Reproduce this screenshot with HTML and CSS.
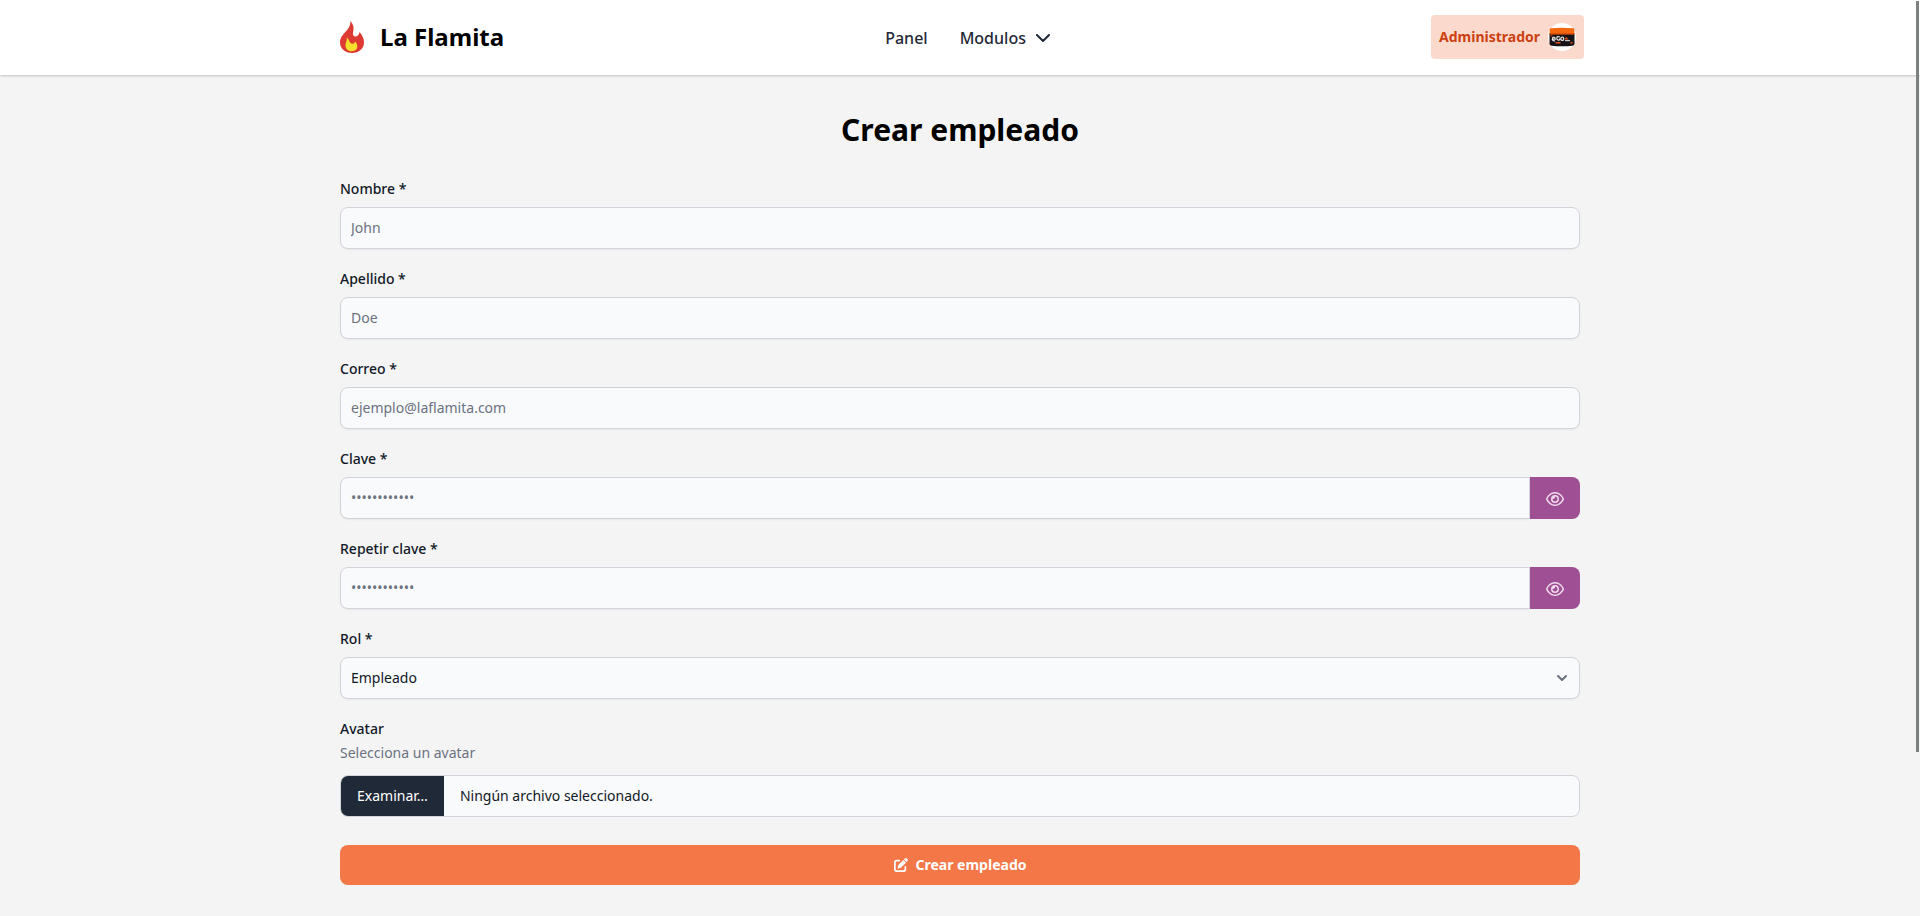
FILE: index.html
```html
<!DOCTYPE html>
<html lang="es">
<head>
<meta charset="utf-8">
<meta name="viewport" content="width=device-width, initial-scale=1">
<title>Crear empleado - La Flamita</title>
<link rel="stylesheet" href="styles.css">
</head>
<body>
<svg class="sprite" aria-hidden="true">
  <symbol id="eye" viewBox="0 0 576 512"><path d="M288 80c-65.2 0-118.8 29.6-159.9 67.7C89.6 183.5 63 226 49.4 256c13.6 30 40.2 72.5 78.6 108.3C169.2 402.4 222.8 432 288 432s118.8-29.6 159.9-67.7C486.4 328.5 513 286 526.6 256c-13.6-30-40.2-72.5-78.6-108.3C406.8 109.6 353.2 80 288 80zM95.4 112.6C142.5 68.8 207.2 32 288 32s145.5 36.8 192.6 80.6c46.8 43.5 78.1 95.4 93 131.1c3.3 7.9 3.3 16.7 0 24.6c-14.9 35.7-46.2 87.7-93 131.1C433.5 443.2 368.8 480 288 480s-145.5-36.8-192.6-80.6C48.6 356 17.3 304 2.5 268.3c-3.3-7.9-3.3-16.7 0-24.6C17.3 208 48.6 156 95.4 112.6zM288 336c44.2 0 80-35.8 80-80s-35.8-80-80-80c-.7 0-1.3 0-2 0c1.3 5.1 2 10.5 2 16c0 35.3-28.7 64-64 64c-5.5 0-10.9-.7-16-2c0 .7 0 1.3 0 2c0 44.2 35.8 80 80 80zm0-208a128 128 0 1 1 0 256 128 128 0 1 1 0-256z"/></symbol>
</svg>

<header class="topbar">
  <div class="topbar-inner">
    <a class="brand" href="#">
      <svg class="flame" viewBox="0 0 24 32" aria-hidden="true">
        <path fill="#dc3a32" d="M10.4 0C13.400 3 14.200 7 13.200 10.500c-.7 2.500-.2 4.400 1.500 4.900 2.400.5 4.400-1.400 4.800-4.400 2.700 3 4.500 6.500 4.500 10.500C24 27.600 18.800 32 12 32S0 27.600 0 21.500C0 16.800 2.600 14 5.400 11 8.600 7.600 10.600 4.600 10.400 0z"/>
        <path fill="#f6df2c" d="M6.800 16.400c2.300 1.600 2.200 3.600 3.400 5.400 1.400 1.500 4 1.100 5.100-1.400 1.400 1.600 2 3.400 2 5.200 0 2.900-2.400 4.600-5.700 4.600-3.500 0-6.100-2.200-6.100-6 0-3 1.800-4.600 1.300-7.800z"/>
      </svg>
      <span>La Flamita</span>
    </a>
    <nav class="menu">
      <a href="#">Panel</a>
      <button type="button" class="menu-button">Modulos
        <svg class="menu-chevron" viewBox="0 0 14 8" aria-hidden="true"><path d="M1 1l6 6 6-6"/></svg>
      </button>
    </nav>
    <button type="button" class="account-button">Administrador
      <svg class="avatar" viewBox="0 0 28 28" aria-hidden="true">
        <circle cx="14" cy="14" r="14" fill="#fff"/>
        <path fill="#151315" d="M1.500 10h25v10.500q0 2-2 2.300-10.500 1-21 0-2-.3-2-2.300z"/>
        <path fill="#f4670f" d="M3 5.200q11-.8 22 0 1.200.1 1.300 1.300v4.800H1.700V6.500Q1.800 5.300 3 5.200z"/>
        <path fill="#d9480b" d="M1.700 10.300h24.600v1.200H1.700z"/>
        <path fill="none" stroke="#e8e6e6" stroke-width="1.200" d="M4.300 16.200h3q0-2-1.500-2T4.300 16.200q0 1.900 2.800 1.600M11.900 14q-3-1.300-3.100 1.200 0 2.400 2.800 1.800v-1.500M14 14.200q1.700-.3 1.700 1.500t-1.500 1.700-1.400-1.600 1.200-1.600"/>
        <path fill="#e6511d" d="M17 15.500l1.500-1.500 1 1.500 1.400 1h-4zM7.500 19h5v1.500h-5zM22.500 19h2v1.500h-2zM2.500 12.500h2v1h-2z"/>
        <path fill="#c9c7c7" d="M17 17h5v1.200h-5z"/>
      </svg>
    </button>
  </div>
</header>

<main class="page">
  <h1>Crear empleado</h1>
  <form class="form">
    <div class="field">
      <label for="nombre">Nombre *</label>
      <input class="control" id="nombre" type="text" placeholder="John">
    </div>
    <div class="field">
      <label for="apellido">Apellido *</label>
      <input class="control" id="apellido" type="text" placeholder="Doe">
    </div>
    <div class="field">
      <label for="correo">Correo *</label>
      <input class="control" id="correo" type="email" placeholder="ejemplo@laflamita.com">
    </div>
    <div class="field">
      <label for="clave">Clave *</label>
      <div class="password">
        <input class="control" id="clave" type="password" placeholder="••••••••••••">
        <button type="button" class="reveal" aria-label="Mostrar clave"><svg aria-hidden="true"><use href="#eye"/></svg></button>
      </div>
    </div>
    <div class="field">
      <label for="repetir">Repetir clave *</label>
      <div class="password">
        <input class="control" id="repetir" type="password" placeholder="••••••••••••">
        <button type="button" class="reveal" aria-label="Mostrar clave repetida"><svg aria-hidden="true"><use href="#eye"/></svg></button>
      </div>
    </div>
    <div class="field">
      <label for="rol">Rol *</label>
      <div class="select">
        <select class="control" id="rol"><option>Empleado</option></select>
        <svg viewBox="0 0 10 6" aria-hidden="true"><path d="M1 1l4 4 4-4"/></svg>
      </div>
    </div>
    <div class="field file-field">
      <label for="avatar">Avatar</label>
      <p class="hint" id="avatar-hint">Selecciona un avatar</p>
      <input class="file-input" id="avatar" type="file" aria-describedby="avatar-hint">
      <label class="file" for="avatar">
        <span class="file-browse">Examinar…</span>
        <span class="file-name">Ningún archivo seleccionado.</span>
      </label>
    </div>
    <button type="submit" class="submit">
      <svg viewBox="0 0 512 512" aria-hidden="true"><path d="M471.6 21.7c-21.9-21.9-57.3-21.9-79.2 0L362.3 51.7l97.9 97.9 30.1-30.1c21.9-21.9 21.9-57.3 0-79.2L471.6 21.7zm-299.2 220c-6.1 6.1-10.8 13.6-13.5 21.9l-29.6 88.8c-2.9 8.6-.6 18.1 5.8 24.6s15.9 8.7 24.6 5.8l88.8-29.6c8.2-2.7 15.7-7.4 21.9-13.5L437.7 172.3 339.7 74.3 172.4 241.7zM96 64C43 64 0 107 0 160V416c0 53 43 96 96 96H352c53 0 96-43 96-96V320c0-17.7-14.3-32-32-32s-32 14.3-32 32v96c0 17.7-14.3 32-32 32H96c-17.7 0-32-14.3-32-32V160c0-17.7 14.3-32 32-32h96c17.7 0 32-14.3 32-32s-14.3-32-32-32H96z"/></svg>
      Crear empleado
    </button>
  </form>
</main>
<div class="scroll-thumb" aria-hidden="true"></div>
</body>
</html>
```
FILE: styles.css
```css
* {
  box-sizing: border-box;
}

body {
  margin: 0;
  background: #f4f4f4;
  color: #111827;
  font-family: "Noto Sans", sans-serif;
  font-size: 14px;
  line-height: 20px;
}

button,
input,
select {
  font: inherit;
  color: inherit;
}

button {
  border: 0;
  cursor: pointer;
}

a {
  color: inherit;
  text-decoration: none;
}

svg {
  display: block;
  flex: none;
}

.sprite {
  position: absolute;
  width: 0;
  height: 0;
}

.topbar {
  background: #fff;
  box-shadow: 0 1px 3px rgba(0, 0, 0, 0.1), 0 1px 2px rgba(0, 0, 0, 0.1);
}

.topbar-inner {
  display: flex;
  align-items: center;
  justify-content: space-between;
  max-width: 1280px;
  margin: 0 auto;
  padding: 15px 16px 16px 20px;
}

.brand {
  display: flex;
  align-items: center;
  gap: 16px;
  color: #000;
  font-size: 24px;
  font-weight: 700;
  line-height: 32px;
}

.flame {
  width: 24px;
  height: 32px;
}

.menu {
  display: flex;
  gap: 32px;
  padding-top: 1px;
  color: #1f2937;
  font-size: 16px;
  font-weight: 500;
  line-height: 24px;
}

.menu-button {
  display: flex;
  align-items: center;
  gap: 10px;
  padding: 0;
  background: none;
}

.menu-chevron {
  width: 14px;
  height: 8px;
  fill: none;
  stroke: currentColor;
  stroke-width: 2;
  stroke-linecap: round;
  stroke-linejoin: round;
}

.account-button {
  display: flex;
  align-items: center;
  gap: 8px;
  padding: 8px;
  border-radius: 4px;
  background: #fbdacd;
  color: #cb4110;
  font-weight: 700;
}

.avatar {
  width: 28px;
  height: 28px;
}

.page {
  max-width: 1280px;
  margin: 0 auto;
  padding: 37px 20px 32px;
}

h1 {
  margin: 0 0 31px;
  color: #000;
  font-size: 30px;
  font-weight: 700;
  line-height: 36px;
  text-align: center;
}

.form {
  display: flex;
  flex-direction: column;
  gap: 20px;
}

.field {
  display: flex;
  flex-direction: column;
  gap: 8px;
  font-weight: 500;
}

.control {
  width: 100%;
  height: 42px;
  padding: 0 10px;
  border: 1px solid #d1d5db;
  border-radius: 8px;
  background: #f9fafb;
  box-shadow: 0 1px 2px rgba(0, 0, 0, 0.05);
  font-weight: 400;
}

input.control {
  padding-bottom: 2px;
}

.control::placeholder {
  color: #6b7280;
  opacity: 1;
}

.password {
  display: flex;
}

.password .control {
  flex: 1;
  min-width: 0;
  border-radius: 8px 0 0 8px;
}

.reveal {
  padding: 1px 16px 0;
  border-radius: 0 8px 8px 0;
  background: #9f4f93;
}

.reveal svg {
  width: 18px;
  height: 16px;
  fill: #f0d9ed;
}

.select {
  display: grid;
  align-items: center;
}

.select > * {
  grid-area: 1 / 1;
}

.select select {
  appearance: none;
}

.select svg {
  justify-self: end;
  width: 10px;
  height: 6px;
  margin-right: 13px;
  fill: none;
  stroke: #6b7280;
  stroke-width: 2;
  stroke-linecap: round;
  stroke-linejoin: round;
  pointer-events: none;
}

.file-field {
  position: relative;
  gap: 4px;
}

.hint {
  margin: 0 0 8px;
  color: #6b7280;
  font-weight: 400;
}

.file-input {
  position: absolute;
  bottom: 0;
  width: 1px;
  height: 1px;
  opacity: 0;
}

.file {
  display: flex;
  overflow: hidden;
  border: 1px solid #d1d5db;
  border-radius: 8px;
  background: #f9fafb;
  font-weight: 400;
  cursor: pointer;
}

.file-browse {
  padding: 10px 16px;
  background: #1f2937;
  color: #fff;
}

.file-name {
  padding: 10px 16px;
}

.submit {
  display: flex;
  align-items: center;
  justify-content: center;
  gap: 8px;
  margin-top: 8px;
  padding: 10px 20px;
  border-radius: 8px;
  background: #f47748;
  color: #fff;
  font-weight: 700;
}

.submit svg {
  width: 14px;
  height: 14px;
  fill: currentColor;
}

.scroll-thumb {
  position: fixed;
  top: 1px;
  right: 1px;
  width: 3px;
  height: 82vh;
  background: #7c807f;
}
```
